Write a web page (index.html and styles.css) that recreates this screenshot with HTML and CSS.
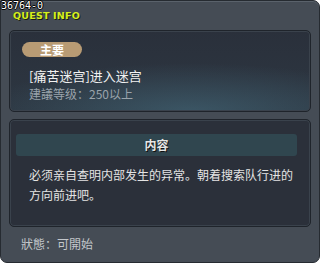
FILE: index.html
```html
<!DOCTYPE html>
<html lang="zh">

<head>
    <meta charset="UTF-8">
    <title>Quest Info</title>
    <link rel="stylesheet" href="styles.css">
</head>

<body>
    <div class="window">
        <div class="quest-id">36764-0</div>
        <div class="title">QUEST INFO</div>

        <div class="panel summary">
            <div class="badge">主要</div>
            <div class="quest-name">[痛苦迷宫]进入迷宫</div>
            <div class="quest-level">建議等级：250以上</div>
        </div>

        <div class="panel content">
            <div class="content-head">内容</div>
            <div class="content-text">必须亲自查明内部发生的异常。朝着搜索队行进的方向前进吧。</div>
        </div>

        <div class="status">狀態：可開始</div>
    </div>
</body>

</html>
```

FILE: styles.css
```css
body {
    margin: 0;
    background-color: #fff;
    font-family: "Noto Sans CJK SC", "Noto Sans", sans-serif;
}

.window {
    position: relative;
    width: 302px;
    height: 261px;
    background-color: #454c55;
    border: 1px solid #262b31;
    border-radius: 0 7px 7px 7px;
    box-shadow: inset 0 1px 0 #5a626b;
    padding: 0 8px;
    margin-right: 2px;
    display: flex;
    flex-direction: column;
}

.quest-id {
    position: absolute;
    top: -1px;
    left: 0;
    font-family: "DejaVu Sans Mono", monospace;
    font-size: 10px;
    line-height: 11px;
    color: #fff;
    text-shadow: 1px 0 #000, -1px 0 #000, 0 1px #000, 0 -1px #000;
}

.title {
    margin: 10px 0 0 4px;
    height: 10px;
    font-family: "DejaVu Sans", sans-serif;
    font-weight: bold;
    font-size: 9.5px;
    line-height: 10px;
    letter-spacing: 0.2px;
    color: #d6f01e;
    text-shadow: 1px 1px #1a1f10;
}

.panel {
    border: 1px solid #1f242b;
    border-radius: 5px;
    box-shadow: inset 0 0 0 1px #3a424c;
}

.summary {
    margin-top: 9px;
    height: 82px;
    padding: 11px 12px 0;
    box-sizing: border-box;
    background:
        radial-gradient(ellipse 70% 60% at 60% 100%, rgba(70, 110, 128, 0.55), rgba(70, 110, 128, 0) 100%),
        linear-gradient(#2a303b, #2d3742);
}

.badge {
    width: 60px;
    height: 15px;
    border-radius: 8px;
    background-color: #b89b74;
    color: #fff;
    font-weight: bold;
    font-size: 12px;
    line-height: 15px;
    text-align: center;
}

.quest-name {
    margin: 11px 0 0 7px;
    font-size: 13px;
    line-height: 16px;
    color: #f2f2f2;
}

.quest-level {
    margin: 2px 0 0 7px;
    font-size: 12px;
    line-height: 15px;
    color: #9aa3ab;
}

.content {
    margin-top: 7px;
    height: 108px;
    padding: 14px 13px 0 6px;
    box-sizing: border-box;
    background-color: #2b303a;
}

.content-head {
    height: 22px;
    border-radius: 3px;
    background-color: #30464f;
    color: #e6e6e6;
    font-weight: bold;
    font-size: 12px;
    line-height: 22px;
    text-align: center;
    text-shadow: 1px 1px #111;
}

.content-text {
    margin: 9px 0 0 13px;
    font-size: 12px;
    line-height: 20px;
    color: #e4e4e4;
    width: 266px;
}

.status {
    margin: 10px 0 0 12px;
    font-size: 12px;
    line-height: 14px;
    color: #c3c7cb;
}
```
